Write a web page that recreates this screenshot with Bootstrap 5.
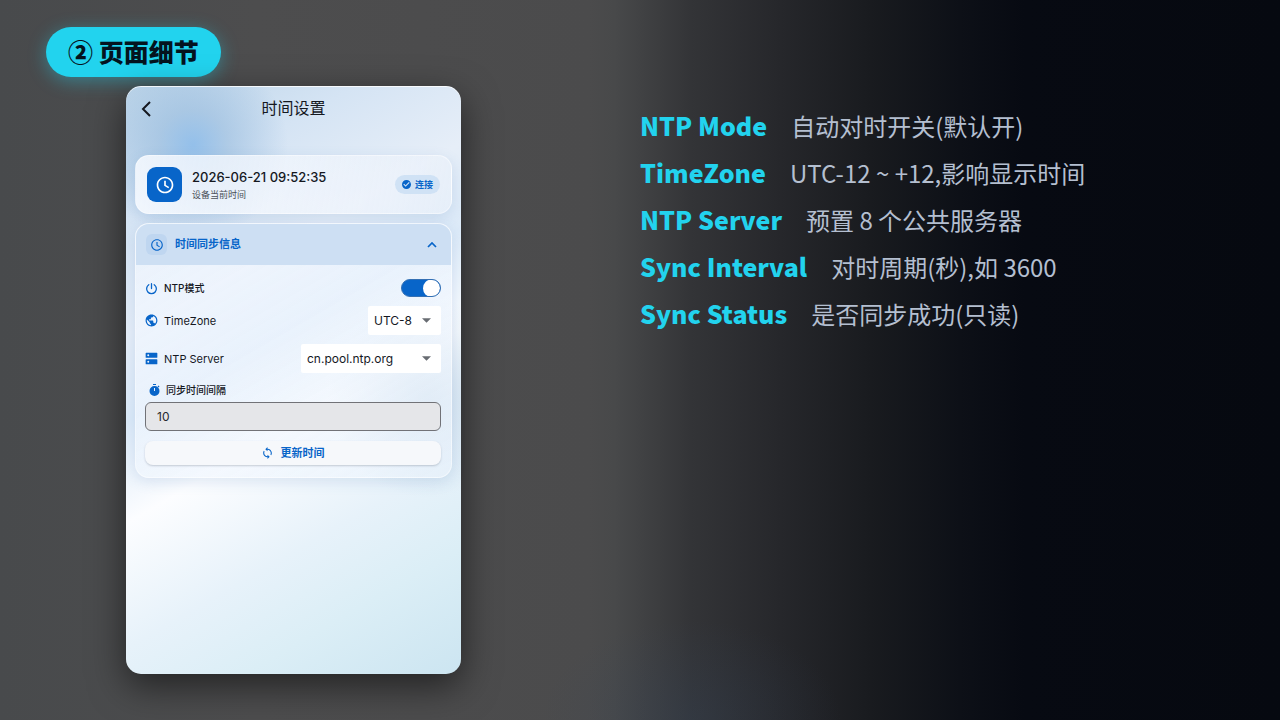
<!DOCTYPE html>
<html lang="zh-CN">
<head>
<meta charset="utf-8">
<meta name="viewport" content="width=device-width, initial-scale=1">
<title>时间设置</title>
<link href="https://cdn.jsdelivr.net/npm/bootstrap@5.3.0/dist/css/bootstrap.min.css" rel="stylesheet">
<style>
  :root { --blue: #0865c9; --cyan: #22d3ee; --ink: #15181f; }
  body {
    font-family: "Noto Sans CJK SC", sans-serif;
    background:
      radial-gradient(ellipse 150px 100px at 54% 100%, rgba(52, 68, 90, .3), transparent),
      linear-gradient(90deg, #484a4c 0, #4d4d4e 20%, #4b4b4c 46%, #48494a 48%, #333437 54%, #26272b 61%, #191b1f 68%, #0d1017 75%, #070a12 80%, #060910 100%);
  }
  .page-head { padding: 27px 46px 9px; }
  .step-tag {
    height: 50px; padding: 0 22px; border-radius: 25px; font-size: 25px; font-weight: 900; line-height: 48px;
    color: #04141f; background: var(--cyan); box-shadow: 0 4px 18px rgba(34, 211, 238, .4);
  }
  .device-col { padding-left: 126px; padding-bottom: 46px; }
  .device {
    max-width: 335px; min-height: 588px; padding: 0 9px; border-radius: 15px;
    font-family: Inter, "Noto Sans CJK SC", sans-serif; color: var(--ink);
    background:
      radial-gradient(circle at 20% 10%, rgba(128, 181, 232, .75) 0, rgba(140, 180, 218, .5) 35px, transparent 95px),
      radial-gradient(circle at 90% 53%, rgba(185, 208, 228, .6), transparent 100px),
      linear-gradient(150deg, #bcd4e8 0, #d5e4f4 17%, #e6eef8 32%, #dceaf8 43%, #fcfdff 56%, #e7f2fa 72%, #dbeef6 84%, #cce5f1 100%);
    box-shadow: 0 12px 36px rgba(0, 0, 0, .55), inset 0 1px 0 rgba(255, 255, 255, .8);
  }
  .device-bar { display: grid; grid-template-columns: 24px 1fr 24px; height: 45px; margin-bottom: 24px; }
  .device-bar h1 { font-size: 16px; }
  .glass { border: 1px solid rgba(255, 255, 255, .45); border-radius: 14px; box-shadow: 0 4px 14px rgba(70, 120, 180, .16); }
  .now-card { height: 59px; padding: 0 11px; margin-bottom: 9px; background: linear-gradient(100deg, rgba(247, 250, 255, .85), rgba(235, 241, 250, .6)); }
  .clock-tile { width: 35px; height: 35px; border-radius: 9px; color: #fff; background: var(--blue); }
  .now-text { margin-left: 10px; }
  .now-time { font-size: 13px; font-weight: 500; line-height: 19px; }
  .now-note { font-size: 9px; line-height: 15px; color: #4a4f58; }
  .link-chip { height: 19px; padding: 0 7px; font-size: 9px; font-weight: 700; color: var(--blue); background: #d0e2f5; }
  .sync-card { background: linear-gradient(150deg, rgba(243, 248, 255, .7), rgba(236, 244, 253, .55)); overflow: hidden; }
  .sync-toggle { height: 41px; padding: 0 14px 0 10px; font-size: 11px; font-weight: 700; color: var(--blue); background: #cddff3; border: 0; }
  .icon-tile { width: 21px; height: 21px; border-radius: 6px; background: #bfd6f0; }
  .sync-body { padding: 14px 10px 12px 9px; }
  .field-label { gap: 6px; font-size: 11px; line-height: 16px; }
  .field-label.cjk { font-size: 10px; font-weight: 500; }
  .field-row { margin-bottom: 9px; }
  .blue { color: var(--blue); }
  .form-switch.ntp-wrap { min-height: 0; }
  .form-switch .ntp-switch {
    width: 40px; height: 18px; margin: 0; border: 1px solid #3470b4; box-shadow: none;
    background-color: var(--blue); background-size: 17px 17px;
    background-image: url("data:image/svg+xml,%3Csvg xmlns='http://www.w3.org/2000/svg' viewBox='0 0 18 18'%3E%3Ccircle cx='9' cy='9' r='9' fill='%23fff'/%3E%3C/svg%3E");
  }
  .form-select.pick {
    height: 29px; padding: 0 28px 0 6px; border: 0; border-radius: 2px; font-size: 12px; line-height: 18px; color: var(--ink); background-color: #fff;
    background-image: url("data:image/svg+xml,%3Csvg xmlns='http://www.w3.org/2000/svg' viewBox='0 0 10 5'%3E%3Cpath d='M0 0h10L5 5z' fill='%23686c72'/%3E%3C/svg%3E");
    background-size: 9px 5px; background-position: right 10px center;
  }
  .pick-zone { width: 73px; }
  .pick-server { width: 140px; }
  .form-control.interval { height: 29px; padding: 0 11px; font-size: 12px; color: #26292e; background: #e5e6e9; border: 1px solid #717277; border-radius: 6px; margin-bottom: 10px; }
  .update-btn { height: 24px; border-radius: 8px; font-size: 11px; font-weight: 700; color: var(--blue); background: #f6f8fb; border: 0; box-shadow: 0 1px 2px rgba(60, 70, 90, .25); }
  .notes-list { padding-top: 16px; font-size: 24px; line-height: 46px; }
  .note-line { height: 47px; }
  .notes-list dt { font-size: 25px; font-weight: 900; color: var(--cyan); }
  .notes-list dd { color: #b4bfd0; }
</style>
</head>
<body class="min-vh-100">
<header class="page-head d-flex">
  <h2 class="step-tag mb-0">② 页面细节</h2>
</header>
<main class="row g-0">
  <section class="col-6 device-col">
    <div class="device">
      <div class="device-bar align-items-center">
        <button class="btn p-0 border-0 d-flex ps-1" type="button" aria-label="返回">
          <svg width="14" height="16" viewBox="0 0 14 16" fill="none" stroke="#15181f" stroke-width="2"><path d="M11 1 4 8l7 7"/></svg>
        </button>
        <h1 class="mb-0 fw-normal text-center">时间设置</h1>
      </div>

      <div class="glass now-card d-flex align-items-center">
        <span class="clock-tile d-flex align-items-center justify-content-center">
          <svg width="20" height="20" viewBox="0 0 24 24" fill="currentColor"><path d="M11.99 2C6.47 2 2 6.48 2 12s4.47 10 9.99 10C17.52 22 22 17.52 22 12S17.52 2 11.99 2zM12 20c-4.42 0-8-3.58-8-8s3.58-8 8-8 8 3.58 8 8-3.58 8-8 8zm1-13h-2v6l5 3 1-1.6-4-2.4z"/></svg>
        </span>
        <div class="now-text">
          <div class="now-time">2026-06-21 09:52:35</div>
          <div class="now-note">设备当前时间</div>
        </div>
        <span class="link-chip rounded-pill d-flex align-items-center gap-1 ms-auto">
          <svg width="9" height="9" viewBox="2 2 20 20" fill="currentColor"><path d="M12 2C6.48 2 2 6.48 2 12s4.48 10 10 10 10-4.48 10-10S17.52 2 12 2zm-2 15l-5-5 1.8-1.8L10 13.400l7.200-7.200L19 8l-9 9z"/></svg>
          连接
        </span>
      </div>

      <div class="glass sync-card">
        <button class="sync-toggle w-100 d-flex align-items-center gap-2" type="button" data-bs-toggle="collapse" data-bs-target="#syncBody" aria-expanded="true" aria-controls="syncBody">
          <span class="icon-tile d-flex align-items-center justify-content-center">
            <svg width="14" height="14" viewBox="0 0 24 24" fill="currentColor"><path d="M11.990 2C6.470 2 2 6.480 2 12s4.470 10 9.990 10C17.520 22 22 17.520 22 12S17.520 2 11.990 2zM12 20c-4.420 0-8-3.580-8-8s3.580-8 8-8 8 3.580 8 8-3.580 8-8 8zm1-13h-2v6l5 3 1-1.600-4-2.400z"/></svg>
          </span>
          时间同步信息
          <svg class="ms-auto" width="10" height="10" viewBox="0 0 10 10" fill="none" stroke="currentColor" stroke-width="1.700"><path d="M1 7l4-4 4 4"/></svg>
        </button>
        <div class="collapse show" id="syncBody">
          <div class="sync-body">
            <div class="field-row d-flex align-items-center justify-content-between">
              <label class="field-label cjk d-flex align-items-center" for="ntpMode">
                <svg class="blue" width="13" height="13" viewBox="0 0 24 24" fill="none" stroke="currentColor" stroke-width="2.400" stroke-linecap="round"><path d="M12 3v9M7 5a9 9 0 1 0 10 0"/></svg>
                NTP模式
              </label>
              <div class="form-check form-switch ntp-wrap p-0 m-0 d-flex">
                <input class="form-check-input ntp-switch" type="checkbox" role="switch" id="ntpMode" checked>
              </div>
            </div>
            <div class="field-row d-flex align-items-center justify-content-between">
              <label class="field-label d-flex align-items-center" for="zone">
                <svg class="blue" width="13" height="13" viewBox="1 1 22 22" fill="currentColor"><path d="M12 2C6.480 2 2 6.480 2 12s4.480 10 10 10 10-4.480 10-10S17.520 2 12 2zm-1 17.930c-3.950-.490-7-3.850-7-7.930 0-.620.080-1.210.210-1.790L9 15v1c0 1.100.9 2 2 2v1.930zm6.900-2.540c-.260-.810-1-1.390-1.900-1.390h-1v-3c0-.550-.450-1-1-1H8v-2h2c.550 0 1-.450 1-1V7h2c1.100 0 2-.9 2-2v-.410c2.930 1.190 5 4.060 5 7.410 0 2.080-.8 3.970-2.100 5.390z"/></svg>
                TimeZone
              </label>
              <select class="form-select pick pick-zone" id="zone"><option>UTC-8</option></select>
            </div>
            <div class="field-row d-flex align-items-center justify-content-between">
              <label class="field-label d-flex align-items-center" for="server">
                <svg class="blue" width="13" height="13" viewBox="2 2 20 20" fill="currentColor"><path fill-rule="evenodd" d="M4 3h16q1 0 1 1v6q0 1-1 1H4q-1 0-1-1V4q0-1 1-1zm3 2.500a1.500 1.500 0 1 0 0 3 1.500 1.500 0 0 0 0-3zM4 13h16q1 0 1 1v6q0 1-1 1H4q-1 0-1-1v-6q0-1 1-1zm3 2.500a1.500 1.500 0 1 0 0 3 1.500 1.500 0 0 0 0-3z"/></svg>
                NTP Server
              </label>
              <select class="form-select pick pick-server" id="server"><option>cn.pool.ntp.org</option></select>
            </div>
            <label class="field-label cjk d-flex align-items-center mb-1 ps-1" for="interval">
              <svg class="blue" width="11" height="12" viewBox="0 0 22 24" fill="currentColor"><path d="M8 0h6v2H8z"/><path fill-rule="evenodd" d="M11 4a10 10 0 1 0 0 20 10 10 0 0 0 0-20zm-1 4h2v6h-2z"/><path d="M17 5l2-2 2 2-2 2z"/></svg>
              同步时间间隔
            </label>
            <input class="form-control interval" id="interval" type="text" value="10" readonly>
            <button class="btn update-btn w-100 p-0 d-flex align-items-center justify-content-center gap-2" type="button">
              <svg width="11" height="12" viewBox="3 1 18 22" fill="currentColor"><path d="M12 4V1L8 5l4 4V6c3.310 0 6 2.690 6 6 0 1.010-.250 1.970-.7 2.800l1.460 1.460C19.540 15.030 20 13.570 20 12c0-4.420-3.580-8-8-8zm0 14c-3.310 0-6-2.690-6-6 0-1.010.250-1.970.7-2.800L5.240 7.740C4.460 8.970 4 10.430 4 12c0 4.420 3.580 8 8 8v3l4-4-4-4v3z"/></svg>
              更新时间
            </button>
          </div>
        </div>
      </div>
    </div>
  </section>

  <section class="col-6">
    <dl class="notes-list mb-0">
      <div class="note-line d-flex gap-4 align-items-baseline"><dt>NTP Mode</dt><dd class="mb-0">自动对时开关(默认开)</dd></div>
      <div class="note-line d-flex gap-4 align-items-baseline"><dt>TimeZone</dt><dd class="mb-0">UTC-12 ~ +12,影响显示时间</dd></div>
      <div class="note-line d-flex gap-4 align-items-baseline"><dt>NTP Server</dt><dd class="mb-0">预置 8 个公共服务器</dd></div>
      <div class="note-line d-flex gap-4 align-items-baseline"><dt>Sync Interval</dt><dd class="mb-0">对时周期(秒),如 3600</dd></div>
      <div class="note-line d-flex gap-4 align-items-baseline"><dt>Sync Status</dt><dd class="mb-0">是否同步成功(只读)</dd></div>
    </dl>
  </section>
</main>
<script src="https://cdn.jsdelivr.net/npm/bootstrap@5.3.0/dist/js/bootstrap.bundle.min.js"></script>
</body>
</html>
